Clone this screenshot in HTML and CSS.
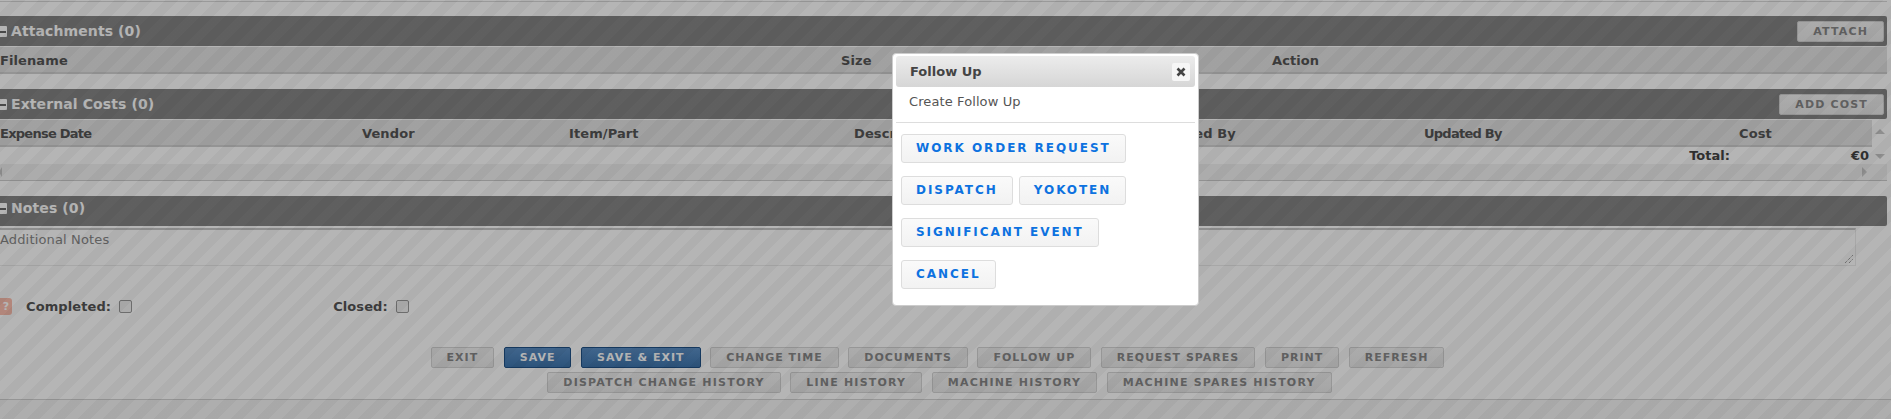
FILE: index.html
```html
<!DOCTYPE html>
<html lang="en">
<head>
<meta charset="utf-8">
<title>Follow Up</title>
<link rel="stylesheet" href="styles.css">
</head>
<body>
<main class="page">
  <section class="section first">
    <header class="bar">
      <span class="minus"></span><h2>Attachments (0)</h2>
      <button class="btn bar-btn">Attach</button>
    </header>
    <div class="thead cols-a"><span>Filename</span><span>Size</span><span>Action</span></div>
  </section>

  <section class="section">
    <header class="bar">
      <span class="minus"></span><h2>External Costs (0)</h2>
      <button class="btn bar-btn">Add Cost</button>
    </header>
    <div class="grid-wrap">
      <div class="grid-main">
        <div class="thead cols-b"><span class="tight">Expense Date</span><span>Vendor</span><span>Item/Part</span><span>Description</span><span>Created By</span><span class="tight">Updated By</span><span>Cost</span></div>
        <div class="tfoot"><span>Total:</span><span class="sum">€0</span></div>
      </div>
      <div class="vscroll"><i class="arrow up"></i><i class="arrow down"></i></div>
    </div>
    <div class="hscroll"><i class="arrow left"></i><i class="arrow right"></i></div>
  </section>

  <section class="section">
    <header class="bar bar-plain"><span class="minus"></span><h2>Notes (0)</h2></header>
    <div class="notes">
      <span>Additional Notes</span>
      <svg class="grip" width="10" height="10" viewBox="0 0 10 10"><path d="M1 9 9 1M5 9 9 5" stroke="#777" stroke-dasharray="1 1" fill="none"/></svg>
    </div>
  </section>

  <div class="checks">
    <span class="help">?</span>
    <label class="check-completed">Completed:</label><span class="box"></span>
    <label class="check-closed">Closed:</label><span class="box"></span>
  </div>

  <div class="actions">
    <button class="btn">Exit</button>
    <button class="btn primary">Save</button>
    <button class="btn primary">Save &amp; Exit</button>
    <button class="btn">Change Time</button>
    <button class="btn">Documents</button>
    <button class="btn">Follow Up</button>
    <button class="btn">Request Spares</button>
    <button class="btn">Print</button>
    <button class="btn">Refresh</button>
  </div>
  <div class="actions second">
    <button class="btn">Dispatch Change History</button>
    <button class="btn">Line History</button>
    <button class="btn">Machine History</button>
    <button class="btn">Machine Spares History</button>
  </div>
  <div class="page-foot"></div>
</main>

<div class="overlay"></div>

<div class="dialog" role="dialog">
  <div class="dialog-title">
    <span>Follow Up</span>
    <button class="close" aria-label="Close"><svg width="10" height="10" viewBox="0 0 10 10"><path d="M1.5 1.5 8.5 8.5M8.5 1.5 1.5 8.5" stroke="#444" stroke-width="2.6" fill="none"/></svg></button>
  </div>
  <p class="dialog-text">Create Follow Up</p>
  <div class="dialog-buttons">
    <div class="dialog-row"><button class="dbtn">Work Order Request</button></div>
    <div class="dialog-row"><button class="dbtn">Dispatch</button><button class="dbtn">Yokoten</button></div>
    <div class="dialog-row"><button class="dbtn">Significant Event</button></div>
    <div class="dialog-row"><button class="dbtn">Cancel</button></div>
  </div>
</div>
</body>
</html>
```

FILE: styles.css
```css
* { box-sizing: border-box; }
html, body { margin: 0; height: 419px; overflow: hidden; background: #fff; }
body { font-family: "DejaVu Sans", Verdana, sans-serif; color: #333; position: relative; }

.page { width: 1887px; height: 419px; border-top: 1px solid transparent; }
.page::before { content: ""; display: block; height: 1px; margin-bottom: 14px; background: #d8d8d8; }

.section { margin-bottom: 15px; }
.bar {
  display: flex; align-items: center; height: 30px;
  background: #868686; border-radius: 0 2px 2px 0;
  padding-right: 3px;
}
.bar h2 { margin: 0 0 0 4px; font-size: 14px; line-height: 30px; font-weight: 700; color: #fff; letter-spacing: .1px; }
.minus { width: 7px; height: 11px; background: #fff; position: relative; border-radius: 0 1px 1px 0; }
.minus::after { content: ""; position: absolute; left: 0; right: 1px; top: 5px; height: 2px; background: #666; }
.bar .bar-btn { margin-left: auto; letter-spacing: 1.15px; }
.bar-plain { align-items: flex-start; }
.bar-plain h2 { line-height: 24px; }
.bar-plain .minus { margin-top: 7px; }

.thead {
  display: grid; height: 27px; align-items: center; padding-top: 2px;
  background: #e3e3e3; border-bottom: 2px solid #d0d0d0;
  font-size: 13px; font-weight: 700; color: #555; letter-spacing: .1px;
  white-space: nowrap; overflow: hidden;
}
.section .thead { margin-top: 1px; }
.cols-a { grid-template-columns: 841px 431px 1fr; }
.cols-b { grid-template-columns: 362px 207px 285px 300px 270px 315px 1fr; }
.tight { letter-spacing: -.75px; }

.grid-wrap { display: flex; }
.grid-main { flex: 1; min-width: 0; }
.tfoot {
  display: flex; align-items: center; height: 17px; padding-right: 3px;
  font-size: 13px; font-weight: 700; color: #444;
}
.tfoot span:first-child { margin-left: auto; }
.sum { margin-left: 121px; }
.vscroll { width: 15px; display: flex; flex-direction: column; align-items: center; justify-content: space-between; padding: 10px 0 5px; }
.hscroll {
  height: 17px; display: flex; align-items: center; justify-content: space-between;
  background: #f2f2f2; border-bottom: 1px solid #ccc; padding-right: 20px;
}
.arrow { display: block; width: 0; height: 0; border: 5px solid transparent; }
.arrow.up { border-bottom-color: #c8c8c8; border-top-width: 0; border-bottom-width: 5px; }
.arrow.down { border-top-color: #c8c8c8; border-bottom-width: 0; border-top-width: 5px; }
.arrow.left { border-right-color: #c8c8c8; border-left-width: 0; border-right-width: 3px; margin-left: -1px; }
.arrow.right { border-left-color: #c8c8c8; border-right-width: 0; border-left-width: 5px; }

.notes {
  position: relative; height: 38px; margin-top: 2px; margin-right: 31px;
  border-top: 2px solid #c8c8c8; border-bottom: 1px solid #ebebeb; border-right: 1px solid #ebebeb;
  font-size: 13px; color: #888; line-height: 17px; padding-top: 1px; letter-spacing: .15px;
}
.grip { position: absolute; right: 1px; bottom: 1px; }

.checks { display: flex; align-items: center; height: 18px; margin-top: 31px; font-size: 13px; font-weight: 700; color: #555; }
.help { width: 12px; height: 17px; background: #fbbdad; color: #fff; font-size: 11px; display: flex; align-items: center; justify-content: center; border-radius: 0 3px 3px 0; }
.check-completed { margin-left: 14px; letter-spacing: .1px; }
.check-closed { margin-left: 201px; letter-spacing: .1px; }
.box { width: 13px; height: 13px; margin-left: 8px; background: #f2f2f2; border: 1px solid #999; border-radius: 2px; }

.actions { display: flex; justify-content: center; gap: 9.6px; margin-top: 4px; padding-right: 12px; }
.checks + .actions { margin-top: 32px; }
.actions.second { padding-right: 8px; }
.actions.second .btn { letter-spacing: 1.2px; }

.page-foot { margin-top: 6px; height: 20px; background: #f5f5f5; border-top: 1px solid #d2d2d2; width: 1891px; }

.btn {
  height: 21px; padding: 0 15px; margin: 0;
  font: 700 11px/19px "DejaVu Sans", Verdana, sans-serif; letter-spacing: 1px; text-transform: uppercase;
  color: #888; background: linear-gradient(#f2f2f2, #e9e9e9); border: 1px solid #d4d4d4; border-radius: 2px;
  white-space: nowrap;
}
.btn.primary { color: #fff; background: linear-gradient(#5b8fc6, #3e75ad); border-color: #1f5187; }

.overlay {
  position: absolute; inset: 0; z-index: 5;
  background: repeating-linear-gradient(135deg, rgba(0,0,0,.29) 0 9px, rgba(0,0,0,.315) 9px 18px);
}

.dialog {
  position: absolute; z-index: 10; left: 892px; top: 53px; width: 307px; height: 253px;
  background: #fff; border: 1px solid #ccc; border-radius: 4px; padding: 2px 3px;
}
.dialog-title {
  position: relative; height: 31px; border-radius: 3px;
  background: linear-gradient(#ececec, #d6d6d6);
  font-size: 13px; font-weight: 700; color: #444; line-height: 31px; padding-left: 14px;
}
.close {
  position: absolute; right: 5px; top: 7px; width: 18px; height: 18px; padding: 0;
  display: flex; align-items: center; justify-content: center;
  background: #f6f6f6; border: 0; border-radius: 2px;
}
.dialog-text { margin: 0; height: 36px; padding: 6px 0 0 13px; font-size: 13px; line-height: 17px; color: #555; border-bottom: 1px solid #ddd; letter-spacing: .1px; }
.dialog-buttons { padding: 11px 0 0 5px; }
.dialog-row { display: flex; gap: 6px; margin-bottom: 13px; }
.dbtn {
  height: 29px; padding: 0 14px; margin: 0;
  font: 700 12px/27px "DejaVu Sans", Verdana, sans-serif; letter-spacing: 1.95px; text-transform: uppercase;
  color: #0d72e0; background: linear-gradient(#fafafa, #f2f2f2); border: 1px solid #ddd; border-radius: 3px; white-space: nowrap;
}
```
